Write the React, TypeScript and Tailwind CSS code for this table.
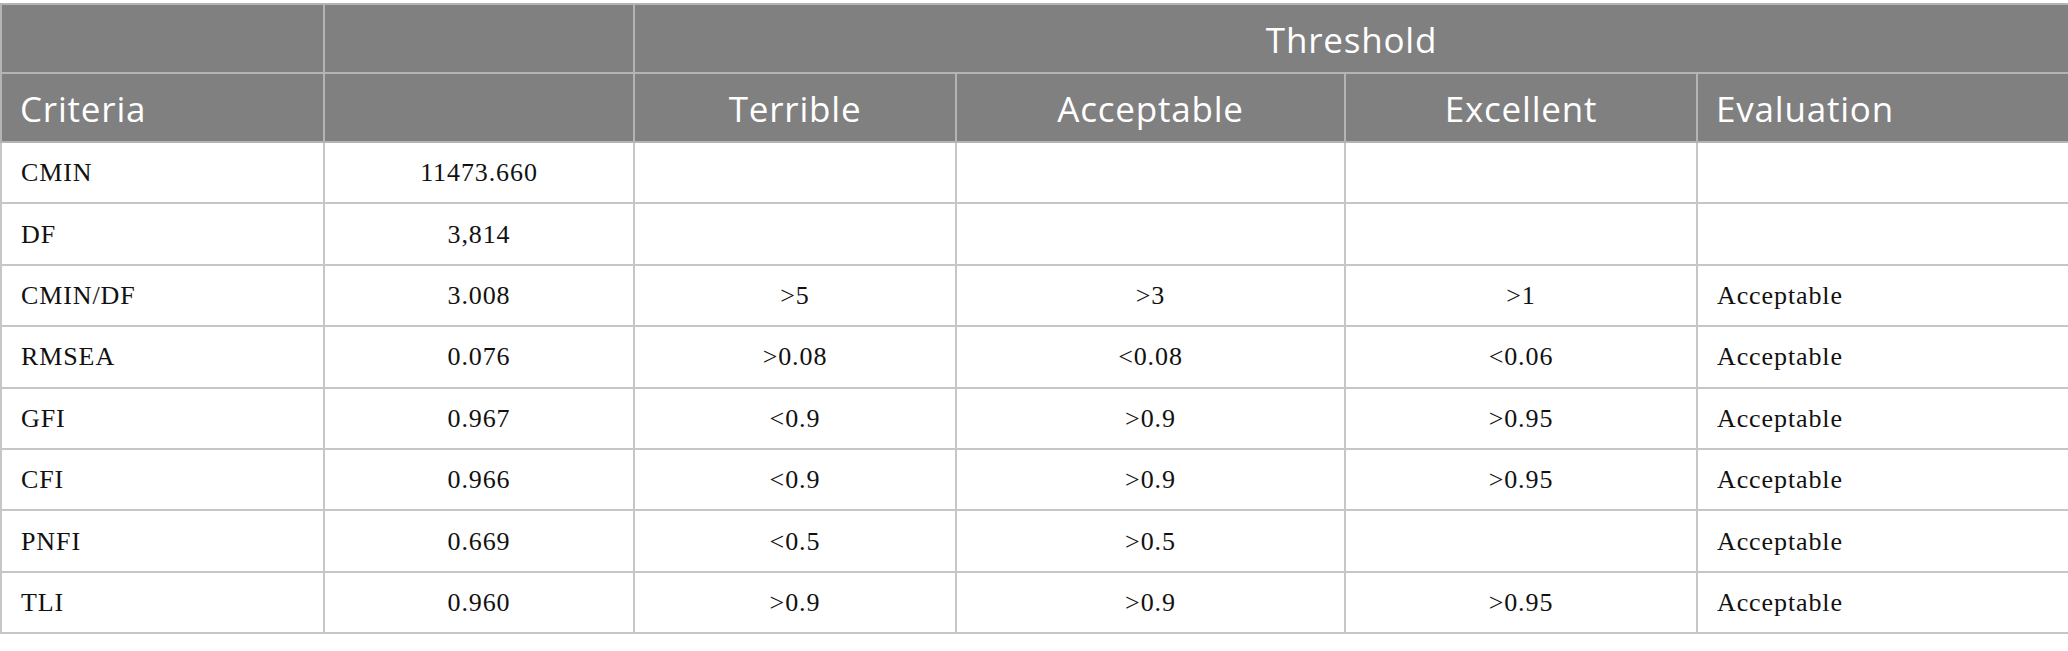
import React from "react";

const rows: string[][] = [
  ["CMIN", "11473.660", "", "", "", ""],
  ["DF", "3,814", "", "", "", ""],
  ["CMIN/DF", "3.008", ">5", ">3", ">1", "Acceptable"],
  ["RMSEA", "0.076", ">0.08", "<0.08", "<0.06", "Acceptable"],
  ["GFI", "0.967", "<0.9", ">0.9", ">0.95", "Acceptable"],
  ["CFI", "0.966", "<0.9", ">0.9", ">0.95", "Acceptable"],
  ["PNFI", "0.669", "<0.5", ">0.5", "", "Acceptable"],
  ["TLI", "0.960", ">0.9", ">0.9", ">0.95", "Acceptable"],
];

const hd = "border-2 border-[#b4b4b4] bg-[#7f807f] text-white font-normal";
const bd = "border-2 border-[#c6c6c6] text-[#111]";

export default function App() {
  return (
    <div className="w-[2068px] h-[651px] bg-white pt-[3px]">
      <table
        className="w-[2068px] border-collapse table-fixed"
        style={{ fontFamily: '"Liberation Serif", serif' }}
      >
        <colgroup>
          <col className="w-[323px]" />
          <col className="w-[310px]" />
          <col className="w-[322px]" />
          <col className="w-[389px]" />
          <col className="w-[352px]" />
          <col className="w-[372px]" />
        </colgroup>
        <thead className="font-['Open_Sans',sans-serif] text-[35px] tracking-[0.8px]">
          <tr className="h-[69px]">
            <th className={hd}></th>
            <th className={hd}></th>
            <th className={`${hd} text-center pt-1`} colSpan={4}>
              Threshold
            </th>
          </tr>
          <tr className="h-[69px]">
            <th className={`${hd} text-left pl-[18px] pt-1`}>Criteria</th>
            <th className={hd}></th>
            <th className={`${hd} text-center pt-1`}>Terrible</th>
            <th className={`${hd} text-center pt-1`}>Acceptable</th>
            <th className={`${hd} text-center pt-1`}>Excellent</th>
            <th className={`${hd} text-left pl-[18px] pt-1`}>Evaluation</th>
          </tr>
        </thead>
        <tbody className="text-[26px] tracking-[0.9px]">
          {rows.map((r, i) => (
            <tr key={i} className="h-[61.4px]">
              {r.map((c, j) => (
                <td
                  key={j}
                  className={`${bd} ${
                    j === 0 || j === 5 ? "text-left pl-[19px]" : "text-center"
                  }`}
                >
                  {c}
                </td>
              ))}
            </tr>
          ))}
        </tbody>
      </table>
    </div>
  );
}
